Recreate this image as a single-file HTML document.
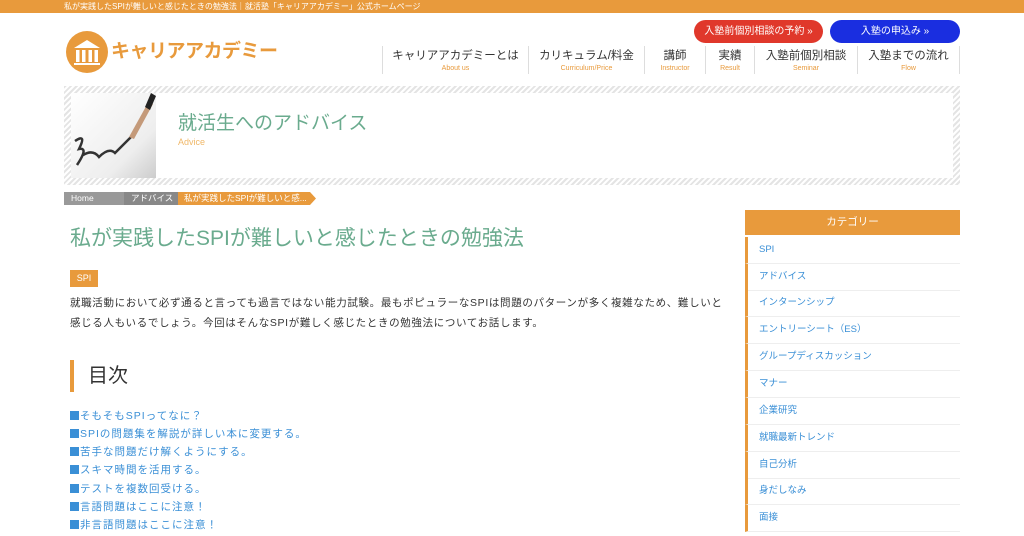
<!DOCTYPE html>
<html><head><meta charset="utf-8"><style>
*{margin:0;padding:0;box-sizing:border-box}
body{width:1024px;height:536px;overflow:hidden;background:#fff;font-family:"Liberation Sans","Noto Sans CJK JP",sans-serif;color:#333;position:relative}
.a{position:absolute}
.top{left:0;top:0;width:1024px;height:13px;background:#e89a3c;color:#fff;font-size:8px;line-height:13px;padding-left:64px}
.btn{top:20px;height:23px;border-radius:12px;color:#fff;font-size:10px;line-height:23px;text-align:center}
.nav{top:46px;height:28px;border-left:1px solid #ddd;text-align:center;font-size:11.5px;line-height:15px;padding-top:3px}
.nav span{display:block;font-size:7px;color:#e89a3c;line-height:9px}
.hatch{background:repeating-linear-gradient(135deg,#e4e4e4 0 2px,#fff 2px 4px)}
.cat{left:745px;width:215px;height:27px;border-left:3px solid #e89a3c;border-bottom:1px solid #eee;font-size:9.5px;color:#3a8fd6;line-height:26px;padding-left:11px}
.toc{left:70px;font-size:10.5px;color:#3a8fd6;letter-spacing:1px}
.toc i{display:inline-block;width:9px;height:9px;background:#3a8fd6;margin-right:1px;vertical-align:-1px}
</style></head><body>
<div class="a top">私が実践したSPIが難しいと感じたときの勉強法｜就活塾「キャリアアカデミー」公式ホームページ</div>
<svg class="a" style="left:66px;top:31px" width="42" height="42" viewBox="0 0 42 42"><circle cx="21" cy="21" r="21" fill="#e89a3c"/><path d="M8 17 L21 9 L34 17 Z" fill="#fff"/><rect x="10" y="19" width="3.5" height="12" fill="#fff"/><rect x="16" y="19" width="3.5" height="12" fill="#fff"/><rect x="22.5" y="19" width="3.5" height="12" fill="#fff"/><rect x="28.5" y="19" width="3.5" height="12" fill="#fff"/><rect x="8" y="32" width="26" height="2" fill="#fff"/></svg>
<div class="a" style="left:111px;top:40px;font-size:19px;font-weight:bold;color:#e89a3c;letter-spacing:-0.5px;line-height:24px">キャリアアカデミー</div>
<div class="a btn" style="left:694px;width:129px;background:#e0382b">入塾前個別相談の予約 »</div>
<div class="a btn" style="left:830px;width:130px;background:#1a2ee0">入塾の申込み »</div>
<div class="a nav" style="left:382px;width:146px">キャリアアカデミーとは<span>About us</span></div>
<div class="a nav" style="left:528px;width:116px">カリキュラム/料金<span>Curriculum/Price</span></div>
<div class="a nav" style="left:644px;width:61px">講師<span>Instructor</span></div>
<div class="a nav" style="left:705px;width:49px">実績<span>Result</span></div>
<div class="a nav" style="left:754px;width:103px">入塾前個別相談<span>Seminar</span></div>
<div class="a nav" style="left:857px;width:103px;border-right:1px solid #ddd">入塾までの流れ<span>Flow</span></div>
<div class="a hatch" style="left:64px;top:86px;width:896px;height:99px"></div>
<div class="a" style="left:71px;top:93px;width:882px;height:85px;background:#fff"></div>
<div class="a" style="left:71px;top:93px;width:85px;height:85px;background:linear-gradient(135deg,#fff,#eee 70%,#ccc)"></div>
<svg class="a" style="left:71px;top:93px" width="85" height="85"><path d="M4 48 Q16 40 8 56 Q18 54 6 72 M12 62 Q22 56 28 64 Q38 54 44 60 Q54 50 62 42" stroke="#333" stroke-width="2.5" fill="none"/><path d="M58 44 L78 8 L82 11 L63 46 Z" fill="#c49a7a"/><path d="M74 14 L80 0 L85 3 L79 17Z" fill="#222"/></svg>
<div class="a" style="left:178px;top:112px;font-size:19px;color:#6aab8e;line-height:24px">就活生へのアドバイス</div>
<div class="a" style="left:178px;top:137px;font-size:9px;color:#f0b869">Advice</div>
<div class="a" style="left:64px;top:192px;width:62px;height:13px;background:#999;color:#fff;font-size:8.5px;line-height:13px;padding-left:7px">Home</div>
<div class="a" style="left:124px;top:192px;width:56px;height:13px;background:#888;color:#fff;font-size:8.5px;line-height:13px;padding-left:7px">アドバイス一覧</div>
<div class="a" style="left:178px;top:192px;width:138px;height:13px;background:#e89a3c;color:#fff;font-size:8.5px;line-height:13px;padding-left:6px;clip-path:polygon(0 0,132px 0,100% 50%,132px 100%,0 100%)">私が実践したSPIが難しいと感...</div>
<div class="a" style="left:70px;top:225px;font-size:21px;color:#6aab8e;line-height:28px">私が実践したSPIが難しいと感じたときの勉強法</div>
<div class="a" style="left:70px;top:270px;width:28px;height:17px;background:#e89a3c;color:#fff;font-size:9px;line-height:17px;text-align:center">SPI</div>
<div class="a" style="left:70px;top:293px;white-space:nowrap;font-size:10.5px;line-height:20px;letter-spacing:0.65px;color:#333">就職活動において必ず通ると言っても過言ではない能力試験。最もポピュラーなSPIは問題のパターンが多く複雑なため、難しいと<br>感じる人もいるでしょう。今回はそんなSPIが難しく感じたときの勉強法についてお話します。</div>
<div class="a" style="left:70px;top:360px;width:4px;height:32px;background:#e89a3c"></div>
<div class="a" style="left:88px;top:363px;font-size:20px;line-height:26px;color:#333">目次</div>
<div class="a toc" style="top:408px"><i></i>そもそもSPIってなに？</div>
<div class="a toc" style="top:426px"><i></i>SPIの問題集を解説が詳しい本に変更する。</div>
<div class="a toc" style="top:444px"><i></i>苦手な問題だけ解くようにする。</div>
<div class="a toc" style="top:462px"><i></i>スキマ時間を活用する。</div>
<div class="a toc" style="top:481px"><i></i>テストを複数回受ける。</div>
<div class="a toc" style="top:499px"><i></i>言語問題はここに注意！</div>
<div class="a toc" style="top:517px"><i></i>非言語問題はここに注意！</div>
<div class="a" style="left:745px;top:210px;width:215px;height:25px;background:#e89a3c;color:#fff;font-size:10.5px;line-height:25px;text-align:center">カテゴリー</div>
<div class="a cat" style="top:237px">SPI</div>
<div class="a cat" style="top:264px">アドバイス</div>
<div class="a cat" style="top:290px">インターンシップ</div>
<div class="a cat" style="top:317px">エントリーシート（ES）</div>
<div class="a cat" style="top:344px">グループディスカッション</div>
<div class="a cat" style="top:371px">マナー</div>
<div class="a cat" style="top:398px">企業研究</div>
<div class="a cat" style="top:425px">就職最新トレンド</div>
<div class="a cat" style="top:452px">自己分析</div>
<div class="a cat" style="top:478px">身だしなみ</div>
<div class="a cat" style="top:505px">面接</div>
</body></html>
